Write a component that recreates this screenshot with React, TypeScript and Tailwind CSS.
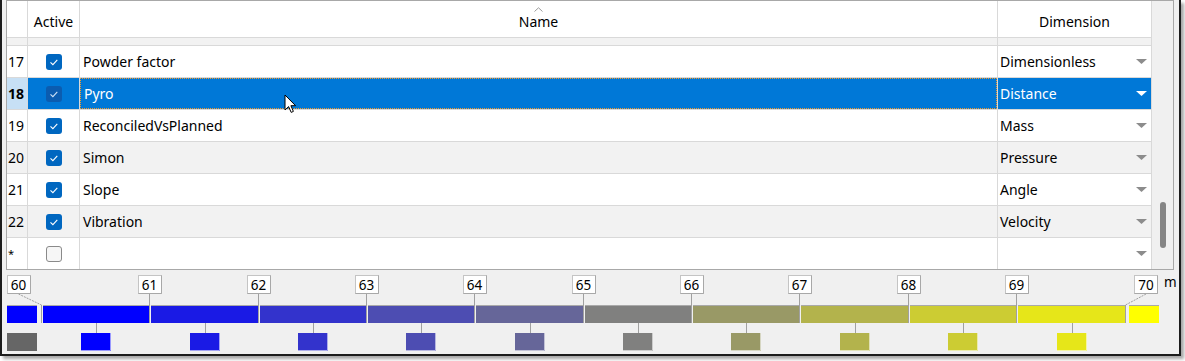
import React from "react"

type Row = { n: number; name: string; dim: string; selected?: boolean }

const rows: Row[] = [
  { n: 17, name: "Powder factor", dim: "Dimensionless" },
  { n: 18, name: "Pyro", dim: "Distance", selected: true },
  { n: 19, name: "ReconciledVsPlanned", dim: "Mass" },
  { n: 20, name: "Simon", dim: "Pressure" },
  { n: 21, name: "Slope", dim: "Angle" },
  { n: 22, name: "Vibration", dim: "Velocity" },
]

// blue -> yellow ramp used by the legend
const ramp = (k: number) => {
  const r = Math.round(25.5 * k)
  const h = (v: number) => v.toString(16).padStart(2, "0")
  return `#${h(r)}${h(r)}${h(255 - r)}`
}

const Check = ({ dark }: { dark?: boolean }) => (
  <div
    className={`w-[16px] h-[16px] rounded-[3px] flex items-center justify-center ${dark ? "bg-[#0b5cb0]" : "bg-[#0067c0]"}`}
  >
    <svg width="16" height="16" viewBox="0 0 16 16">
      <path d="M4.5 8.3 L6.9 10.6 L11.3 5.9" fill="none" stroke={dark ? "#cfe2f6" : "#ffffff"} strokeWidth="1.1" />
    </svg>
  </div>
)

const Arrow = ({ white }: { white?: boolean }) => (
  <svg width="11" height="5" viewBox="0 0 11 5" className="mr-[4px]">
    <path d="M0 0 H11 L5.5 5 Z" fill={white ? "#ffffff" : "#8c8c8c"} />
  </svg>
)

const Legend = () => {
  const ticks = Array.from({ length: 11 }, (_, k) => Math.round(41 + 108.35 * k))
  const labelX = ticks.map((t, k) => (k === 0 ? 18.5 : k === 10 ? 1146 : t + 0.5))
  return (
    <svg width="1177" height="84" viewBox="2 270 1177 84" className="block">
      {/* bars */}
      <rect x={7} y={305} width={30} height={18} fill="#0000ff" />
      <line x1={7} x2={37} y1={305.5} y2={305.5} stroke="#a9a9a9" />
      {ticks.slice(0, 10).map((t, k) => (
        <g key={k}>
          <rect x={t + 2} y={305} width={ticks[k + 1] - t - 2} height={18} fill={ramp(k)} />
          <line x1={t + 2} x2={ticks[k + 1]} y1={305.5} y2={305.5} stroke="#a9a9a9" />
        </g>
      ))}
      <rect x={1129} y={305} width={30} height={18} fill="#ffff00" />
      <line x1={1129} x2={1159} y1={305.5} y2={305.5} stroke="#a9a9a9" />

      {/* swatches */}
      <rect x={7} y={333} width={30} height={18} fill="#666666" />
      {ticks.slice(0, 10).map((t, k) => {
        const cx = Math.round((t + 2 + ticks[k + 1]) / 2)
        return (
          <g key={k}>
            <line x1={cx + 0.5} x2={cx + 0.5} y1={323} y2={333} stroke="#a0a0a0" />
            <rect x={cx - 15} y={333} width={30} height={18} fill={ramp(k)} />
            <path d={`M${cx - 15} ${350.5} H${cx + 14.5} V333`} fill="none" stroke="#ffffff" strokeOpacity="0.6" />
          </g>
        )
      })}

      {/* tick lines */}
      {ticks.slice(1, 10).map((t, k) => (
        <line key={k} x1={t + 0.5} x2={t + 0.5} y1={294} y2={323} stroke="#a0a0a0" />
      ))}
      <line x1={18.5} y1={294} x2={41.5} y2={305} stroke="#a0a0a0" strokeDasharray="2 1" />
      <line x1={41.5} x2={41.5} y1={305} y2={323} stroke="#a0a0a0" />
      <line x1={1146} y1={294} x2={1125.5} y2={305} stroke="#a0a0a0" strokeDasharray="2 1" />
      <line x1={1125.5} x2={1125.5} y1={305} y2={323} stroke="#a0a0a0" />

      {/* labels */}
      {labelX.map((x, k) => (
        <g key={k}>
          <rect x={Math.round(x - 12) + 0.5} y={275.5} width={23} height={18} fill="#ffffff" stroke="#c4c4c4" />
          <path
            d={`M${Math.round(x - 12) + 0.5} ${293.5} H${Math.round(x - 12) + 23.5} V275.5`}
            fill="none"
            stroke="#a8a8a8"
          />
          <text x={x} y={289.5} textAnchor="middle" fontSize="13.5" fill="#000">
            {60 + k}
          </text>
        </g>
      ))}
      <text x={1164} y={287} fontSize="13.5" fill="#000">
        m
      </text>
    </svg>
  )
}

export default function App() {
  return (
    <div className="relative w-[1185px] h-[361px] bg-white overflow-hidden font-['Noto_Sans',sans-serif] text-[14px] text-black">
      <div className="w-[1181px] h-[356px] bg-[#f0f0f0] border-l-2 border-r-2 border-b-2 border-[#1c1c1c] shadow-[3px_3px_3px_rgba(0,0,0,0.35)] flex flex-col">
        {/* grid */}
        <div className="ml-[4px] w-[1168px] h-[270px] border border-[#a8a8a8] bg-white flex">
          <div className="w-[1145px] flex flex-col">
            {/* header */}
            <div className="flex h-[37px] border-b border-[#d9d9d9] leading-[20px]">
              <div className="w-[21px] border-r border-[#d9d9d9]" />
              <div className="w-[52px] border-r border-[#d9d9d9] flex justify-center pt-[11px]">Active</div>
              <div className="w-[918px] border-r border-[#d9d9d9] flex flex-col items-center pt-[6px]">
                <svg width="9" height="5" viewBox="0 0 9 5">
                  <path d="M0.5 4.5 L4.5 0.8 L8.5 4.5" fill="none" stroke="#9a9a9a" />
                </svg>
                <span>Name</span>
              </div>
              <div className="w-[154px] border-r border-[#d9d9d9] flex justify-center pt-[11px]">Dimension</div>
            </div>
            {/* partially scrolled row */}
            <div className="flex h-[8px] border-b border-[#d9d9d9] bg-[#f2f2f2]">
              <div className="w-[21px] border-r border-[#d9d9d9]" />
              <div className="w-[52px] border-r border-[#d9d9d9]" />
              <div className="w-[918px] border-r border-[#d9d9d9]" />
              <div className="w-[154px] border-r border-[#d9d9d9]" />
            </div>
            {rows.map((r, i) => {
              const alt = i % 2 === 1
              const bg = r.selected ? "bg-[#0078d7] text-white" : alt ? "bg-[#f2f2f2]" : "bg-white"
              return (
                <div key={r.n} className="flex h-[32px] border-b border-[#d9d9d9] leading-[20px]">
                  <div
                    className={`w-[21px] border-r border-[#d9d9d9] flex items-center pl-[1px] ${r.selected ? "bg-[#c7e0f5] font-bold" : alt ? "bg-[#f2f2f2]" : "bg-white"}`}
                  >
                    {r.n}
                  </div>
                  <div className={`w-[52px] border-r border-[#d9d9d9] flex items-center justify-center ${bg}`}>
                    <Check dark={r.selected} />
                  </div>
                  <div className={`w-[918px] border-r border-[#d9d9d9] ${bg}`}>
                    <div
                      className={`h-full flex items-center pl-[3px] ${r.selected ? "border border-dotted border-[#f39a2c]" : ""}`}
                    >
                      {r.name}
                    </div>
                  </div>
                  <div className={`w-[154px] border-r border-[#d9d9d9] flex items-center justify-between pl-[2px] ${bg}`}>
                    <span>{r.dim}</span>
                    <Arrow white={r.selected} />
                  </div>
                </div>
              )
            })}
            {/* new row */}
            <div className="flex h-[31px] leading-[20px]">
              <div className="w-[21px] border-r border-[#d9d9d9] flex items-center pl-[1px] text-[11px]">*</div>
              <div className="w-[52px] border-r border-[#d9d9d9] flex items-center justify-center">
                <div className="w-[16px] h-[16px] rounded-[3px] border border-[#8a8a8a] bg-[#f6f6f6]" />
              </div>
              <div className="w-[918px] border-r border-[#d9d9d9]" />
              <div className="w-[154px] border-r border-[#d9d9d9] flex items-center justify-end">
                <Arrow />
              </div>
            </div>
          </div>
          {/* scrollbar */}
          <div className="w-[21px] bg-[#f0f0f0] flex flex-col">
            <div className="mt-[201px] ml-[8px] w-[6px] h-[46px] rounded-[3px] bg-[#858585]" />
          </div>
        </div>
        {/* colour legend */}
        <Legend />
      </div>
      {/* mouse cursor */}
      <svg width="13" height="20" viewBox="0 0 13 20" className="absolute left-[284px] top-[94px]">
        <path
          d="M1 1 L1 16 L4.6 12.6 L7.2 18.4 L9.4 17.4 L6.9 11.7 L11.6 11.7 Z"
          fill="#ffffff"
          stroke="#000000"
          strokeWidth="1"
          strokeLinejoin="round"
        />
      </svg>
    </div>
  )
}
